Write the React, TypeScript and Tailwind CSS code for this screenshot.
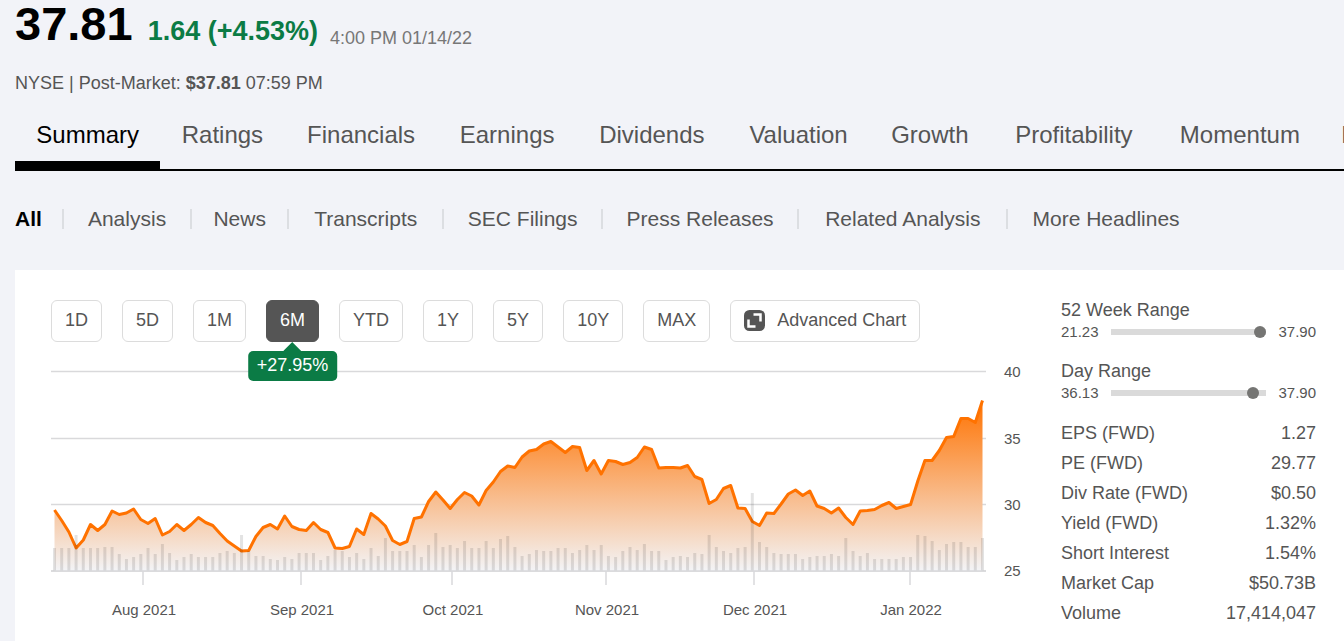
import React, { useState } from 'react';

const TABS = [
  'Summary',
  'Ratings',
  'Financials',
  'Earnings',
  'Dividends',
  'Valuation',
  'Growth',
  'Profitability',
  'Momentum',
  'Peers',
];

const FILTERS = [
  'All',
  'Analysis',
  'News',
  'Transcripts',
  'SEC Filings',
  'Press Releases',
  'Related Analysis',
  'More Headlines',
];

const PERIODS = ['1D', '5D', '1M', '6M', 'YTD', '1Y', '5Y', '10Y', 'MAX'];

const STATS = [
  ['EPS (FWD)', '1.27'],
  ['PE (FWD)', '29.77'],
  ['Div Rate (FWD)', '$0.50'],
  ['Yield (FWD)', '1.32%'],
  ['Short Interest', '1.54%'],
  ['Market Cap', '$50.73B'],
  ['Volume', '17,414,047'],
];

// y of each daily close, in chart units
const CLOSES = [
  150, 160.5, 172, 188, 180, 164.5, 170.5, 164.5, 151, 154.5, 153, 149, 159.5, 163.5, 158.5, 175,
  171.5, 164.5, 170.5, 164.5, 157.5, 162.5, 165.5, 173.5, 181, 186, 191, 190.5, 176.5, 167.5, 164.5,
  169, 156, 166.5, 169.5, 170.5, 162.5, 169.5, 172.5, 188, 188.5, 186.5, 169, 174.5, 153.5, 159, 166,
  180.5, 184.5, 181.5, 158.5, 157, 141.5, 132, 140, 148.5, 139.5, 132.5, 136, 145, 130.5, 122, 111.5,
  106, 107.5, 97, 91, 89.5, 84, 81.5, 87, 92.5, 86.5, 87.5, 110.5, 100.5, 114, 100.5, 101.5, 104.5,
  102.5, 97.5, 87, 89.5, 108, 107.5, 107.5, 108, 105.5, 116.5, 119.5, 143.5, 139.5, 128.5, 125.5, 148,
  148.5, 161.5, 165.5, 153, 153.5, 144, 134, 130, 135.5, 131, 146, 148.5, 153, 148, 157.5, 164.5, 151,
  150.5, 149.5, 145.5, 142.5, 148.5, 146.5, 144.5, 121, 100.5, 100.5, 90.5, 77.5, 76.5, 58.5, 58.5,
  62.5, 40.5,
];

// height of each volume bar
const VOLUMES = [
  23, 23, 23, 36, 23, 23, 23, 24, 24, 17, 12, 14, 17, 23, 17, 27, 18, 11, 14, 17, 14, 14, 14, 18, 20,
  18, 36, 20, 15, 15, 12, 11, 14, 12, 18, 18, 18, 11, 15, 21, 20, 14, 18, 12, 23, 15, 33, 20, 20, 20,
  26, 14, 26, 38, 24, 26, 23, 30, 23, 23, 30, 23, 32, 35, 24, 15, 17, 21, 20, 20, 23, 23, 18, 21, 26,
  21, 26, 15, 14, 20, 24, 21, 27, 20, 20, 11, 14, 15, 14, 18, 17, 36, 24, 20, 18, 23, 24, 78, 29, 24,
  18, 17, 17, 17, 12, 14, 15, 15, 17, 15, 33, 20, 15, 18, 12, 12, 12, 12, 14, 14, 36, 35, 30, 21, 27,
  29, 29, 24, 24, 33,
];

const BASE = 211;
const xAt = (i: number): number => 3.5 + (i * 928) / (CLOSES.length - 1);

const MONTHS = [
  { x: 92, label: 'Aug 2021' },
  { x: 250, label: 'Sep 2021' },
  { x: 401, label: 'Oct 2021' },
  { x: 555, label: 'Nov 2021' },
  { x: 703, label: 'Dec 2021' },
  { x: 859, label: 'Jan 2022' },
];

const LEVELS = [
  { y: 11.5, label: '40' },
  { y: 78.5, label: '35' },
  { y: 144.5, label: '30' },
  { y: BASE, label: '25' },
];

const PriceChart: React.FC = () => {
  const line = CLOSES.map((y, i) => `${xAt(i).toFixed(1)},${y}`).join(' L');
  const area = `M${line} L${xAt(CLOSES.length - 1)},${BASE} L${xAt(0)},${BASE} Z`;

  return (
    <svg viewBox="0 0 972 270" className="mt-[18px] block w-full" role="img" aria-label="6 month price chart">
      <defs>
        <linearGradient id="price-fill" gradientUnits="userSpaceOnUse" x1="0" y1="40" x2="0" y2={BASE}>
          <stop offset="0" stopColor="#ff7200" />
          <stop offset="1" stopColor="#f3f4f7" />
        </linearGradient>
      </defs>
      {LEVELS.map((level) => (
        <line key={level.label} x1="0" x2="935" y1={level.y} y2={level.y} stroke="#d9d9db" strokeWidth="1.5" />
      ))}
      {MONTHS.map((month) => (
        <line key={month.label} x1={month.x} x2={month.x} y1={BASE} y2="225" stroke="#d9d9db" strokeWidth="1.5" />
      ))}
      <path d={area} fill="url(#price-fill)" />
      <path d={`M${line}`} fill="none" stroke="#ff7200" strokeWidth="3" strokeLinejoin="round" />
      {VOLUMES.map((h, i) => (
        <rect key={i} x={xAt(i) - 1.5} y={BASE - h} width="3" height={h} fill="#000" fillOpacity="0.11" />
      ))}
      <line x1="0" x2="935" y1={BASE} y2={BASE} stroke="#d9d9db" strokeWidth="1.5" />
      <g fill="#555" fontSize="15">
        {LEVELS.map((level) => (
          <text key={level.label} x="953" y={Math.round(level.y + 5)}>
            {level.label}
          </text>
        ))}
        {MONTHS.map((month) => (
          <text key={month.label} x={month.x + 1} y="255" textAnchor="middle">
            {month.label}
          </text>
        ))}
      </g>
    </svg>
  );
};

type NavLinkProps = {
  label: string;
  className?: string;
};

const NavLink: React.FC<NavLinkProps> = ({ label, className = '' }) => (
  <a
    href="#"
    data-label={label}
    className={`shrink-0 text-center after:invisible after:block after:h-0 after:overflow-hidden after:font-bold after:content-[attr(data-label)] ${className}`}
  >
    {label}
  </a>
);

type RangeProps = {
  id: string;
  label: string;
  low: string;
  high: string;
  className?: string;
};

const Range: React.FC<RangeProps> = ({ id, label, low, high, className = '' }) => (
  <div className={className}>
    <label htmlFor={id} className="block text-[18px] leading-5">
      {label}
    </label>
    <div className="mt-[2px] flex items-center text-[15px] leading-5">
      <span>{low}</span>
      <input
        id={id}
        type="range"
        min={low}
        max={high}
        step="0.01"
        defaultValue="37.81"
        className="mx-3 h-[6px] min-w-0 flex-1 appearance-none bg-[#dadada] [&::-webkit-slider-thumb]:h-3 [&::-webkit-slider-thumb]:w-3 [&::-webkit-slider-thumb]:appearance-none [&::-webkit-slider-thumb]:rounded-full [&::-webkit-slider-thumb]:bg-[#757573]"
      />
      <span>{high}</span>
    </div>
  </div>
);

const App: React.FC = () => {
  const [period, setPeriod] = useState<string>('6M');

  return (
    <div className="flex min-h-screen flex-col overflow-x-clip bg-[#f2f3f8] pl-[15px] font-['Liberation_Sans',Arial,sans-serif] text-[#555]">
      <header>
        <div className="flex items-end">
          <span className="text-[47px] leading-[48px] font-bold text-black">37.81</span>
          <span className="ml-[15px] text-[27px] leading-[33px] font-bold text-[#0b7b45]">1.64 (+4.53%)</span>
          <span className="ml-3 text-[18px] leading-5 text-[#777]">4:00 PM 01/14/22</span>
        </div>
        <p className="mt-[23px] text-[18px] leading-6">
          NYSE | Post-Market: <b>$37.81</b> 07:59 PM
        </p>
      </header>

      <nav className="mt-6 flex border-b-2 border-black text-[24px] leading-8 whitespace-nowrap">
        {TABS.map((tab) => (
          <NavLink
            key={tab}
            label={tab}
            className={`border-b-8 px-[18px] pb-[10px] ${
              tab === 'Summary' ? 'border-black text-black' : 'border-transparent'
            }`}
          />
        ))}
      </nav>

      <nav className="mt-9 flex items-center text-[21px] leading-6 whitespace-nowrap">
        {FILTERS.map((filter, i) => (
          <React.Fragment key={filter}>
            {i > 0 && <span className="mx-5 h-5 w-[2px] bg-[#dcdee2]"></span>}
            <NavLink label={filter} className={filter === 'All' ? 'font-bold text-black' : ''} />
          </React.Fragment>
        ))}
      </nav>

      <main className="mt-[39px] flex grow gap-[38px] bg-white pt-[30px] pr-7 pb-2 pl-9">
        <section className="min-w-0 flex-1">
          <div className="flex gap-5 text-[18px] leading-[38px]">
            {PERIODS.map((p) => (
              <div key={p} className="relative">
                <button
                  type="button"
                  onClick={() => setPeriod(p)}
                  className={`rounded-md border px-[13px] pb-[2px] ${
                    p === period ? 'border-[#555] bg-[#555] text-white' : 'border-[#dcdcdc]'
                  }`}
                >
                  {p}
                </button>
                {p === '6M' && period === '6M' && (
                  <div className="absolute top-[51px] left-1/2 -translate-x-1/2 rounded-[5px] bg-[#0b7b45] px-[9px] pb-[2px] leading-7 text-white">
                    <svg viewBox="0 0 18 9" className="absolute -top-[9px] left-1/2 h-[9px] w-[18px] -translate-x-1/2">
                      <path d="M9 0L18 9H0Z" fill="#0b7b45" />
                    </svg>
                    +27.95%
                  </div>
                )}
              </div>
            ))}
            <button type="button" className="flex items-center rounded-md border border-[#dcdcdc] px-[13px] pb-[2px]">
              <svg viewBox="0 0 21 21" className="mr-3 h-[21px] w-[21px]">
                <rect width="21" height="21" rx="5.5" fill="#555" />
                <path d="M9.5 4.5H16.5V11.5M4.5 9.5V16.5H11.5" fill="none" stroke="#fff" strokeWidth="2.5" />
              </svg>
              Advanced Chart
            </button>
          </div>
          <PriceChart />
        </section>

        <aside className="w-[255px] shrink-0">
          <Range id="year-range" label="52 Week Range" low="21.23" high="37.90" />
          <Range id="day-range" label="Day Range" low="36.13" high="37.90" className="mt-[19px]" />
          <table className="mt-[15px] w-full text-[18px] leading-[30px]">
            <tbody>
              {STATS.map(([name, value]) => (
                <tr key={name}>
                  <th scope="row" className="p-0 text-left font-normal">
                    {name}
                  </th>
                  <td className="p-0 text-right">{value}</td>
                </tr>
              ))}
            </tbody>
          </table>
        </aside>
      </main>
    </div>
  );
};

export default App;
